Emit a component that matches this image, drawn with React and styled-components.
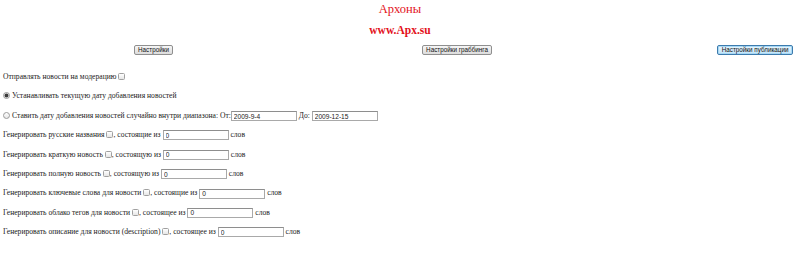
import styled, { createGlobalStyle } from "styled-components";

const GlobalStyle = createGlobalStyle`
  html, body {
    margin: 0;
    padding: 0;
    background: #ffffff;
  }
  body {
    font-family: "Liberation Serif", "Times New Roman", serif;
    color: #222;
  }
`;

const Page = styled.div`
  width: 800px;
  height: 276px;
  overflow: hidden;
`;

const Header = styled.div`
  display: flex;
  flex-direction: column;
  align-items: center;
  padding-top: 2px;
`;

const Title = styled.h1`
  margin: 0;
  font-size: 12.5px;
  line-height: 14px;
  font-weight: normal;
  color: #e3121b;
`;

const Site = styled.h2`
  margin: 7px 0 0;
  font-size: 11.5px;
  line-height: 14px;
  font-weight: bold;
  color: #e3121b;
`;

const ButtonBar = styled.div`
  display: grid;
  grid-template-columns: 307px 300px 1fr;
  align-items: center;
  justify-items: center;
  margin-top: 8px;
  height: 10px;
`;

const Button = styled.button`
  height: 10px;
  padding: 0 3.5px;
  font-family: "Liberation Sans", Arial, sans-serif;
  font-size: 6.3px;
  line-height: 8px;
  color: #111;
  border: 1px solid ${(p) => (p.$primary ? "#3d7bad" : "#8f8f8f")};
  border-radius: 2px;
  background: ${(p) =>
    p.$primary
      ? "linear-gradient(#eaf6fd, #bfe3f8)"
      : "linear-gradient(#f6f6f6, #dcdcdc)"};
  box-shadow: ${(p) => (p.$primary ? "inset 0 0 0 1px #a7d8f5" : "none")};
  justify-self: ${(p) => (p.$end ? "end" : "center")};
  margin-right: ${(p) => (p.$end ? "7px" : "0")};
  cursor: pointer;
`;

const Form = styled.div`
  display: flex;
  flex-direction: column;
  gap: 9.4px;
  margin-top: 17px;
  padding-left: 3px;
`;

const Row = styled.div`
  height: 10px;
  line-height: 10px;
  font-family: "Liberation Serif", "Times New Roman", serif;
  font-size: 7.6px;
  white-space: nowrap;
`;

const Check = styled.input.attrs({ type: "checkbox" })`
  appearance: none;
  width: 7px;
  height: 7px;
  margin: 0;
  vertical-align: -1px;
  border: 1px solid #a0a0a0;
  border-radius: 1.5px;
  background: linear-gradient(#ffffff, #e6e6e6);
`;

const Radio = styled.input.attrs({ type: "radio" })`
  appearance: none;
  width: 7px;
  height: 7px;
  margin: 0 2px 0 0;
  vertical-align: -1px;
  border: 1px solid #9a9a9a;
  border-radius: 50%;
  background: ${(p) =>
    p.checked
      ? "radial-gradient(circle, #3a3a3a 0 1.6px, #d8d8d8 2.2px)"
      : "linear-gradient(#ffffff, #e6e6e6)"};
`;

const Field = styled.input.attrs({ type: "text" })`
  width: 66px;
  height: 10px;
  box-sizing: border-box;
  margin: 0;
  padding: 0 2px;
  vertical-align: middle;
  border: 1px solid #a9a9a9;
  border-top-color: #8e8e8e;
  font-family: "Liberation Sans", Arial, sans-serif;
  font-size: 6.6px;
  color: #222;
  background: #fff;
  outline: none;
`;

const genRows = [
  ["Генерировать русские названия", ", состоящие из"],
  ["Генерировать краткую новость", ", состоящую из"],
  ["Генерировать полную новость", ", состоящую из"],
  ["Генерировать ключевые слова для новости", ", состоящие из"],
  ["Генерировать облако тегов для новости", ", состоящее из"],
  ["Генерировать описание для новости (description)", ", состоящее из"],
];

export default function App() {
  return (
    <Page>
      <GlobalStyle />
      <Header>
        <Title>Архоны</Title>
        <Site>www.Apx.su</Site>
      </Header>
      <ButtonBar>
        <Button>Настройки</Button>
        <Button>Настройки граббинга</Button>
        <Button $primary $end>
          Настройки публикации
        </Button>
      </ButtonBar>
      <Form>
        <Row>
          Отправлять новости на модерацию <Check />
        </Row>
        <Row>
          <Radio name="date" defaultChecked checked readOnly />
          Устанавливать текущую дату добавления новостей
        </Row>
        <Row>
          <Radio name="date" readOnly />
          Ставить дату добавления новостей случайно внутри диапазона: От:
          <Field defaultValue="2009-9-4" /> До: <Field defaultValue="2009-12-15" />
        </Row>
        {genRows.map(([label, tail]) => (
          <Row key={label}>
            {label} <Check />
            {tail} <Field defaultValue="0" /> слов
          </Row>
        ))}
      </Form>
    </Page>
  );
}
